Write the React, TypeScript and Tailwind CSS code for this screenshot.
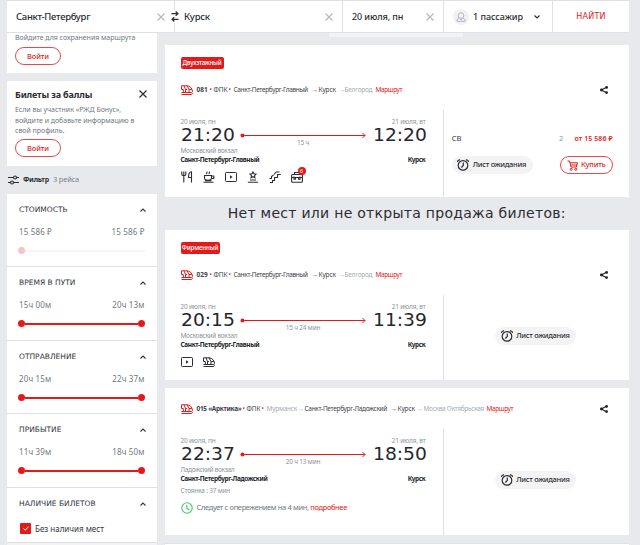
import { useState } from "react";
import type { ReactNode } from "react";
import clsx from "clsx";

type Stop = {
  label: string;
  className: string;
};

type Train = {
  id: string;
  badge?: string;
  badgeClass?: string;
  stops: Stop[];
  departure: string;
  arrival: string;
  duration: string;
  terminal: string;
  station: string;
};

const sliders = [
  { title: "СТОИМОСТЬ", from: "15 586 ₽", to: "15 586 ₽", disabled: true, height: "h-[73px]" },
  { title: "ВРЕМЯ В ПУТИ", from: "15ч 00м", to: "20ч 13м", height: "h-[74px]" },
  { title: "ОТПРАВЛЕНИЕ", from: "20ч 15м", to: "22ч 37м", height: "h-[73px]" },
  { title: "ПРИБЫТИЕ", from: "11ч 39м", to: "18ч 50м", height: "h-[74px]" },
];

const mainRoute: Stop[] = [
  { label: "•", className: "w-[4px] text-[#e21a1a]" },
  { label: "ФПК", className: "w-[15px]" },
  { label: "•", className: "w-[5px] text-[#e21a1a]" },
  { label: "Санкт-Петербург-Главный", className: "w-[78px] tracking-[-0.33px]" },
  { label: "→", className: "w-[7px]" },
  { label: "Курск", className: "w-[20px] tracking-[-0.1px]" },
  { label: "→", className: "w-[6px] text-[#a4abb5]" },
  { label: "Белгород", className: "w-[31px] tracking-[-0.25px] text-[#a4abb5]" },
  { label: "Маршрут", className: "tracking-[-0.4px] text-[#e21a1a]" },
];

const trains: Train[] = [
  {
    id: "081",
    badge: "Двухэтажный",
    badgeClass: "w-[43px] tracking-[-0.25px]",
    stops: [{ label: "081", className: "w-[13px] font-bold" }, ...mainRoute],
    departure: "21:20",
    arrival: "12:20",
    duration: "15 ч",
    terminal: "Московский вокзал",
    station: "Санкт-Петербург-Главный",
  },
  {
    id: "029",
    badge: "Фирменный",
    badgeClass: "w-[39px] tracking-[-0.15px]",
    stops: [{ label: "029", className: "w-[13px] font-bold" }, ...mainRoute],
    departure: "20:15",
    arrival: "11:39",
    duration: "15 ч 24 мин",
    terminal: "Московский вокзал",
    station: "Санкт-Петербург-Главный",
  },
  {
    id: "015",
    stops: [
      { label: "015 «Арктика»", className: "w-[46px] font-bold tracking-[-0.3px]" },
      { label: "•", className: "w-[4px] text-[#e21a1a]" },
      { label: "ФПК", className: "w-[15px]" },
      { label: "•", className: "w-[5px] text-[#e21a1a]" },
      { label: "Мурманск", className: "w-[31px] tracking-[-0.25px] text-[#a4abb5]" },
      { label: "→", className: "w-[7px] text-[#a4abb5]" },
      { label: "Санкт-Петербург-Ладожский", className: "w-[86px] tracking-[-0.3px]" },
      { label: "→", className: "w-[7px]" },
      { label: "Курск", className: "w-[19px] tracking-[-0.1px]" },
      { label: "→", className: "w-[7px] text-[#a4abb5]" },
      { label: "Москва Октябрьская", className: "w-[63px] tracking-[-0.3px] text-[#a4abb5]" },
      { label: "Маршрут", className: "tracking-[-0.4px] text-[#e21a1a]" },
    ],
    departure: "22:37",
    arrival: "18:50",
    duration: "20 ч 13 мин",
    terminal: "Ладожский вокзал",
    station: "Санкт-Петербург-Ладожский",
  },
];

function Svg({ className, box = "0 0 24 24", width = 2, children }: { className?: string; box?: string; width?: number; children: ReactNode }) {
  return (
    <svg viewBox={box} fill="none" stroke="currentColor" strokeWidth={width} className={clsx("shrink-0", className)}>
      {children}
    </svg>
  );
}

function Cross({ className }: { className?: string }) {
  return (
    <Svg box="0 0 8 8" width={1.2} className={className}>
      <path d="M.5 .5l7 7M7.5 .5l-7 7" />
    </Svg>
  );
}

function TrainIcon({ className }: { className?: string }) {
  return (
    <Svg box="0 0 12 10" width={1} className={className}>
      <path d="M.5 4.500V.8H6c3.200 0 5.500 3 5.500 5.700 0 .7-.4 1-1 1H.5M.5 9.500h9.500c.8 0 1.300-.5 1.500-1.500M.5 4.500h1.800v3M3 .8l1.500 3.700v3M6 .8l2 3.700v3M4.500 4.500H6M8 4.500h2.800" />
    </Svg>
  );
}

function AlarmIcon() {
  return (
    <Svg box="0 0 12 12" width={1.2} className="size-3">
      <circle cx="6" cy="6.4" r="4.8" />
      <path d="M.5 3.1C.5 1.6 1.7.7 3.1.9M11.5 3.1C11.5 1.6 10.3.7 8.9.9M6.3 3.6v2.9l-2 2" />
    </Svg>
  );
}

function ShareIcon() {
  return (
    <Svg box="0 0 8 8" width={1.2} className="size-2 text-[#222]">
      <path d="M6.6 1.3L1.3 4l5.3 2.7" />
      <g fill="currentColor" stroke="none">
        <circle cx="1.4" cy="4" r="1.4" />
        <circle cx="6.6" cy="1.4" r="1.4" />
        <circle cx="6.6" cy="6.6" r="1.4" />
      </g>
    </Svg>
  );
}

function VideoIcon() {
  return (
    <Svg box="0 0 12 10" width={1} className="h-[10px] w-3">
      <rect x=".5" y=".5" width="11" height="9" rx=".8" />
      <path d="M5 3.3v3.4L7.6 5z" fill="currentColor" stroke="none" />
    </Svg>
  );
}

function WaitList() {
  return (
    <button className="flex h-[18px] w-[81px] items-center gap-[3.5px] rounded-full bg-[#f3f3f3] pl-[5.5px] text-[#2b2d33]">
      <AlarmIcon />
      <span className="whitespace-nowrap text-[7.5px] font-medium tracking-[-0.3px]">Лист ожидания</span>
    </button>
  );
}

function LoginButton() {
  return (
    <button className="flex h-[18px] w-[46px] items-center justify-center rounded-full border border-[#e9494b] pt-px text-[7.5px] font-medium leading-none tracking-[-0.1px] text-[#e21a1a]">
      Войти
    </button>
  );
}

function SearchBar() {
  return (
    <header className="ml-[7px] flex h-[33px] w-[622px] shrink-0 border-y border-[#dfe0e5] bg-white text-[9px] font-medium text-[#2b2d33]">
      <div className="flex w-[167px] items-center justify-between pl-[9px] pr-[9px]">
        <span className="pt-px text-[9.5px] tracking-[-0.3px]">Санкт-Петербург</span>
        <Cross className="size-2 text-[#b5b8c2]" />
      </div>
      <div className="relative flex w-[168px] items-center justify-between border-l border-[#dfe0e5] pl-[9px] pr-[9px]">
        <span className="absolute -left-1 top-[9px] bg-white py-px">
          <Svg box="0 0 8 11" width={1.2} className="h-[11px] w-2">
            <path d="M.5 2.7h6.5M4.6.5L7 2.7 4.6 4.9M7.5 8.3H1M3.4 6.1L1 8.3l2.4 2.2" />
          </Svg>
        </span>
        <span className="pt-px text-[9.5px] tracking-[-0.2px]">Курск</span>
        <Cross className="size-2 text-[#b5b8c2]" />
      </div>
      <div className="flex w-[101px] items-center justify-between border-l border-[#dfe0e5] pl-[9px] pr-[9px]">
        <span className="tracking-[-0.1px]">20 июля, пн</span>
        <Cross className="size-2 text-[#b5b8c2]" />
      </div>
      <div className="flex w-[109px] items-center border-l border-[#dfe0e5] pl-[9px]">
        <span className="flex size-4 items-center justify-center rounded-full bg-[#f1f1f2] text-[#b5b8c2]">
          <Svg box="0 0 10 10" width={1} className="size-[10px]">
            <circle cx="5" cy="3.6" r="2.8" />
            <path d="M3.5 6L1 7.7v1.7h8V7.7L6.5 6M4 7l1 1 1-1" />
          </Svg>
        </span>
        <span className="ml-1 w-[61px] whitespace-nowrap pt-px tracking-[-0.05px]">1 пассажир</span>
        <Svg box="0 0 6 4" width={1.1} className="h-1 w-1.5">
          <path d="M.5 .5L3 3 5.500 .5" />
        </Svg>
      </div>
      <button className="flex-1 border-l border-[#dfe0e5] pt-px font-['DejaVu_Sans',sans-serif] text-[8px] font-normal tracking-[0.2px] text-[#e21a1a]">
        НАЙТИ
      </button>
    </header>
  );
}

function FilterTitle({ children }: { children: ReactNode }) {
  return (
    <div className="flex h-[10px] items-center justify-between font-['DejaVu_Sans',sans-serif] text-[7.500px] text-[#33363d]">
      <span>{children}</span>
      <Svg box="0 0 6 4" width={1.1} className="h-1 w-1.5">
        <path d="M.5 3.500L3 1l2.500 2.500" />
      </Svg>
    </div>
  );
}

function Sidebar() {
  const [withoutSeats, setWithoutSeats] = useState(true);

  return (
    <aside className="w-[149.500px] shrink-0">
      <div className="h-10 bg-white pl-2">
        <p className="h-[14px] whitespace-nowrap text-[7px] leading-[9px] tracking-[-0.03px] text-[#6f7882]">Войдите для сохранения маршрута</p>
        <LoginButton />
      </div>

      <div className="mt-2 h-[85px] bg-white pl-2 pt-[7px]">
        <div className="flex h-3 items-center justify-between pr-[10px]">
          <h2 className="pt-px text-[9px] font-bold leading-none tracking-[-0.15px] text-[#2b2d33]">Билеты за баллы</h2>
          <Cross className="size-2 text-[#2b2d33]" />
        </div>
        <p className="mt-[5px] h-[34px] whitespace-nowrap text-[7px] leading-[10.500px] tracking-[-0.03px] text-[#6f7882]">
          Если вы участник «РЖД Бонус»,
          <br />
          войдите и добавьте информацию в
          <br />
          свой профиль.
        </p>
        <LoginButton />
      </div>

      <div className="flex h-7 items-center pl-[1px] text-[7.500px] tracking-[-0.2px] text-[#7b828c]">
        <Svg box="0 0 11 10" width={1.1} className="mr-1 h-[10px] w-[11px] text-[#2b2d33]">
          <path d="M0 2.500h5.500M8.500 2.500H11M0 7.500h2.500M5.500 7.500H11" />
          <circle cx="7" cy="2.500" r="1.500" />
          <circle cx="4" cy="7.500" r="1.500" />
        </Svg>
        <span className="w-[30px] text-[7px] font-bold text-[#2b2d33]">Фильтр</span>
        <span>3 рейса</span>
      </div>

      {sliders.map((slider) => (
        <section key={slider.title} className={clsx("border-b border-[#dfe0e5] bg-white pl-3 pr-[11px] pt-[11px]", slider.height)}>
          <FilterTitle>{slider.title}</FilterTitle>
          <div className="mt-3 flex h-[10px] items-center justify-between pr-[1px] text-[8px] tracking-[0.15px] text-[#6f7882]">
            <span>{slider.from}</span>
            <span>{slider.to}</span>
          </div>
          <div className="-ml-px mt-[10px] flex h-[7px] w-[127px] items-center">
            <span className={clsx("size-[7px] rounded-full", slider.disabled ? "bg-[#f8c3c6]" : "bg-[#e21a1a]")} />
            <span className={clsx("h-[2px] flex-1", slider.disabled ? "bg-[#f5f5f6]" : "bg-[#e21a1a]")} />
            {!slider.disabled && <span className="size-[7px] rounded-full bg-[#e21a1a]" />}
          </div>
        </section>
      ))}

      <section className="h-[54px] bg-white pl-3 pr-[11px] pt-[11px]">
        <FilterTitle>НАЛИЧИЕ БИЛЕТОВ</FilterTitle>
        <button onClick={() => setWithoutSeats(!withoutSeats)} className="ml-[1px] mt-[14px] flex items-center gap-[4px] text-[8px] leading-none text-[#33363d]">
          <span className="flex size-[11px] items-center justify-center rounded-[1px] bg-[#e21a1a]">
            {withoutSeats && (
              <Svg box="0 0 6 5" width={1} className="h-[5px] w-1.5 text-white">
                <path d="M.4 2.400L2.300 4.200 5.600.6" />
              </Svg>
            )}
          </span>
          <span className="pt-px">Без наличия мест</span>
        </button>
      </section>
      <div className="h-4 border-t border-[#dfe0e5] bg-[#f3f3f5]" />
    </aside>
  );
}

function Amenities() {
  return (
    <div className="flex h-[14px] items-center text-[#2b2d33]">
      <Svg box="0 0 12 12" width={1.1} className="mr-[10px] size-3">
        <path d="M2.800 4.500v7M.8.5v3c0 1.500 4 1.500 4 0v-3M2.800.5v4M10.500 11.500V.8C8.500.8 7.500 2.500 7.500 6.500h3" />
      </Svg>
      <Svg box="0 0 12 12" width={1.1} className="mr-[10px] size-3">
        <path d="M1.500 4.500h7V7c0 3-7 3-7 0zM8.500 5h2.300v2.500H8.500M.5 11.300h10M3.500 3.200l.6-2.700M6 3.200L6.600.5M2 9.700h6.500" />
      </Svg>
      <span className="mr-[10px]">
        <VideoIcon />
      </span>
      <Svg box="0 0 12 12" width={1.1} className="mr-[10px] size-3">
        <path d="M6 .9l.9 1.900 2.100.3-1.500 1.500.4 2.100L6 5.700l-1.900 1 .4-2.100L3 3.100l2.100-.3zM3 9h6M.8 11.300h10.400" />
      </Svg>
      <Svg box="0 0 12 12" width={1.1} className="mr-[10px] size-3">
        <path d="M11.800 3.500H8.500v3H5.500v3H3.500v2H1M.5 7.500h2v-2l2-1.500M5 3.500L7.200 1h3.300" />
      </Svg>
      <span className="relative">
        <Svg box="0 0 12 12" width={1.1} className="size-3">
          <rect x=".6" y="3.500" width="10.800" height="7.700" rx="1" />
          <path d="M3.500 3.300V1.500h5v1.800M.6 6.500h10.800M3 5.500v2.800h1.500V6.500M7.500 6.500v1.800H9V5.500" />
        </Svg>
        <span className="absolute -right-[3px] -top-[4px] flex size-2 items-center justify-center rounded-full bg-[#e21a1a] text-[6px] leading-none text-white">
          6
        </span>
      </span>
    </div>
  );
}

function Timetable({ train }: { train: Train }) {
  return (
    <>
      <div className="flex h-2 items-center justify-between text-[6.500px] leading-[8px] tracking-[-0.2px] text-[#8d949c]">
        <span>20 июля, пн</span>
        <span>21 июля, вт</span>
      </div>
      <div className="flex h-[18px] items-center justify-between font-['DejaVu_Sans',sans-serif] text-[17px] leading-none text-[#25272c]">
        <span className="w-[53px] origin-left scale-x-[1.1] whitespace-nowrap">{train.departure}</span>
        <span className="relative h-[7px] w-[126px]">
          <Svg box="0 0 126 7" width={1} className="h-[7px] w-[126px] text-[#e21a1a]">
            <circle cx="2.500" cy="3.500" r="2" fill="currentColor" stroke="none" />
            <path d="M4 3.500h121M122.500 1l2.500 2.500-2.500 2.500" />
          </Svg>
          <span className="absolute inset-x-0 top-[7px] text-center font-['Noto_Sans',sans-serif] text-[6.500px] leading-[8px] tracking-[-0.2px] text-[#8d949c]">
            {train.duration}
          </span>
        </span>
        <span className="w-[53px] origin-left scale-x-[1.1] whitespace-nowrap">{train.arrival}</span>
      </div>
      <p className="mt-[3px] h-2 text-[6.500px] leading-[8px] tracking-[-0.3px] text-[#8d949c]">{train.terminal}</p>
      <div className="flex h-[9px] justify-between text-[6.500px] font-bold leading-[9px] tracking-[-0.38px] text-[#25272c]">
        <span>{train.station}</span>
        <span>Курск</span>
      </div>
    </>
  );
}

function TrainCard({ train, className, extra, offer }: { train: Train; className: string; extra: ReactNode; offer: ReactNode }) {
  return (
    <article className={clsx("flex flex-col bg-white", className)}>
      {train.badge && (
        <div className="ml-4 flex h-[24px] items-end">
          <span className={clsx("flex h-3 items-center justify-center whitespace-nowrap rounded-[2px] bg-[#e21a1a] text-[6.200px] font-medium text-white", train.badgeClass)}>
            {train.badge}
          </span>
        </div>
      )}
      <div className="ml-4 mr-[21px] mt-4 flex h-[10px] shrink-0 items-center text-[6.500px] text-[#3f434b]">
        <TrainIcon className="mr-1 h-[10px] w-3 text-[#e21a1a]" />
        {train.stops.map((stop, index) => (
          <span key={index} className={clsx("shrink-0 whitespace-nowrap", stop.className)}>
            {stop.label}
          </span>
        ))}
        <span className="ml-auto">
          <ShareIcon />
        </span>
      </div>
      <div className="mt-[15px] flex min-h-0 flex-1">
        <div className="w-[279px] border-r border-[#dfe0e5] pl-4 pr-[17px] pt-2">
          <Timetable train={train} />
          {extra}
        </div>
        <div className="flex flex-1 justify-center">{offer}</div>
      </div>
    </article>
  );
}

export default function App() {
  return (
    <div className="flex h-[545px] w-[640px] flex-col overflow-hidden bg-[#e8e9ed] font-['Noto_Sans',sans-serif]">
      <SearchBar />
      <div className="flex min-h-0 flex-1 gap-2 pl-[7px]">
        <Sidebar />
        <main className="w-[464.500px] shrink-0">
          <div className="ml-[164.500px] h-1 w-[134px] bg-[#f3f3f4]" />

          <TrainCard
            train={trains[0]}
            className="mt-2 h-[152px]"
            extra={
              <div className="mt-[6px]">
                <Amenities />
              </div>
            }
            offer={
              <div className="mr-[8px] w-[161px] pt-[24px]">
                <div className="flex h-[10px] items-center text-[7.500px] text-[#33363d]">
                  <span>СВ</span>
                  <span className="ml-auto mr-[11px] text-[#8d949c]">2</span>
                  <span className="text-[7px] font-semibold tracking-[0.1px] text-[#e21a1a]">от 15 586 ₽</span>
                </div>
                <div className="mt-[12px] flex justify-between">
                  <WaitList />
                  <button className="flex h-[18px] w-[53px] items-center justify-center gap-[3px] rounded-full border border-[#e9494b] text-[7.500px] font-medium tracking-[-0.25px] text-[#e21a1a]">
                    <Svg box="0 0 11 11" width={1} className="size-[11px]">
                      <path d="M.5 1h2l1.600 6h5.200l1.200-4.200H3.200M4 5h6" />
                      <circle cx="4.200" cy="9.300" r="1" />
                      <circle cx="8.800" cy="9.300" r="1" />
                    </Svg>
                    Купить
                  </button>
                </div>
              </div>
            }
          />

          <h1 className="flex h-[33px] items-center justify-center whitespace-nowrap font-['DejaVu_Sans',sans-serif] text-[14px] tracking-[0.28px] text-[#2b2d33]">
            Нет мест или не открыта продажа билетов:
          </h1>

          <TrainCard
            train={trains[1]}
            className="h-[150px]"
            extra={
              <div className="mt-[6px] flex h-[14px] items-center gap-[10px] text-[#2b2d33]">
                <VideoIcon />
                <TrainIcon className="h-[10px] w-3" />
              </div>
            }
            offer={
              <div className="mr-px pt-[32px]">
                <WaitList />
              </div>
            }
          />

          <TrainCard
            train={trains[2]}
            className="mt-2 h-[147px]"
            extra={
              <>
                <p className="mt-[4px] h-2 text-[6.500px] leading-[8px] tracking-[-0.2px] text-[#8d949c]">Стоянка : 37 мин</p>
                <div className="mt-[7px] flex h-3 items-center text-[7.500px] tracking-[-0.35px] text-[#6f7882]">
                  <Svg box="0 0 12 12" width={1.100} className="mr-1 size-3 text-[#4cc371]">
                    <circle cx="6" cy="6" r="5.200" />
                    <path d="M5.800 2.800v3.600l2.500 1.600" />
                  </Svg>
                  <span className="whitespace-nowrap">
                    Следует с опережением на 4 мин, <a className="text-[#e21a1a]">подробнее</a>
                  </span>
                </div>
              </>
            }
            offer={
              <div className="mr-px pt-[42px]">
                <WaitList />
              </div>
            }
          />

          <div className="mt-2 h-4 border-t border-[#dfe0e5] bg-white" />
        </main>
      </div>
    </div>
  );
}
